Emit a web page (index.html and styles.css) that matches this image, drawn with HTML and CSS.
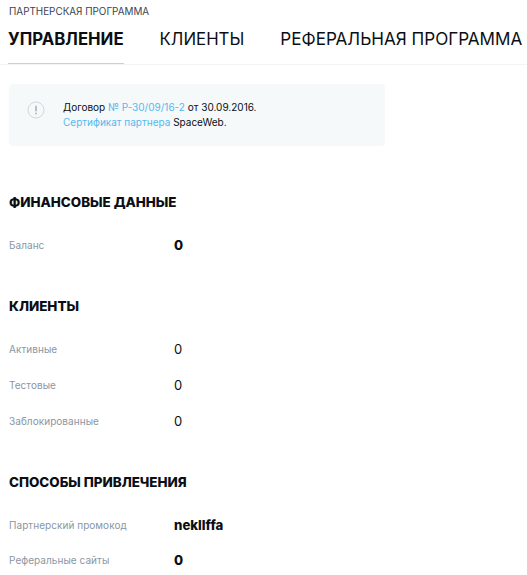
FILE: index.html
```html
<!DOCTYPE html>
<html lang="ru">
<head>
<meta charset="utf-8">
<title>Партнерская программа</title>
<link rel="stylesheet" href="styles.css">
</head>
<body>
<div class="crumb">ПАРТНЕРСКАЯ ПРОГРАММА</div>
<nav class="tabs">
  <a class="tab tab-active">УПРАВЛЕНИЕ</a>
  <a class="tab">КЛИЕНТЫ</a>
  <a class="tab tab-wide">РЕФЕРАЛЬНАЯ ПРОГРАММА</a>
</nav>
<div class="notice">
  <svg class="notice-icon" width="18" height="18" viewBox="0 0 18 18" aria-hidden="true">
    <circle cx="9" cy="9" r="8" fill="none" stroke="#d3d8db" stroke-width="1"/>
    <rect x="8" y="4.5" width="2" height="6" rx="0.8" fill="#b9c0c5"/>
    <rect x="8" y="11.5" width="2" height="2" rx="0.8" fill="#b9c0c5"/>
  </svg>
  <div class="notice-text">
    <div>Договор <a class="link">№ Р-30/09/16-2</a> от 30.09.2016.</div>
    <div><a class="link">Сертификат партнера</a> SpaceWeb.</div>
  </div>
</div>
<section class="group group-first">
  <h2 class="group-title">ФИНАНСОВЫЕ ДАННЫЕ</h2>
  <div class="row"><span class="label">Баланс</span><span class="value value-bold">0</span></div>
</section>
<section class="group group-clients">
  <h2 class="group-title">КЛИЕНТЫ</h2>
  <div class="row"><span class="label">Активные</span><span class="value">0</span></div>
  <div class="row"><span class="label">Тестовые</span><span class="value">0</span></div>
  <div class="row"><span class="label">Заблокированные</span><span class="value">0</span></div>
</section>
<section class="group group-last">
  <h2 class="group-title">СПОСОБЫ ПРИВЛЕЧЕНИЯ</h2>
  <div class="row row-short"><span class="label">Партнерский промокод</span><span class="value value-bold">neklIffa</span></div>
  <div class="row row-short"><span class="label">Реферальные сайты</span><span class="value value-bold">0</span></div>
</section>
</body>
</html>
```
FILE: styles.css
```css
* { box-sizing: border-box; }
html, body { overflow: hidden; }
body {
  margin: 0;
  height: 575px;
  background: #fff;
  color: #0b0f14;
  font-family: Inter, "Noto Sans", sans-serif;
}
.crumb {
  padding: 5px 0 0 9px;
  height: 20px;
  font-size: 9.9px;
  line-height: 13px;
  color: #3a4654;
  white-space: nowrap;
}
.tabs {
  display: flex;
  gap: 36px;
  height: 45px;
  padding-left: 8px;
  border-bottom: 1px solid #f1f5f6;
  white-space: nowrap;
}
.tab {
  height: 44px;
  padding-top: 7px;
  font-size: 16.8px;
  line-height: 24px;
  color: #0b0f14;
}
.tab-wide { font-size: 17.1px; }
.tab-active {
  font-weight: 700;
  border-bottom: 1px solid #c8d2d6;
}
.notice {
  display: flex;
  align-items: center;
  width: 376px;
  height: 62px;
  margin: 19px 0 0 9px;
  padding: 0 0 10px 18px;
  background: #f5f9fa;
  border-radius: 4px;
}
.notice-icon { flex: none; margin-right: 18px; }
.notice-text {
  padding-top: 10px;
  margin-bottom: 1px;
  font-size: 10px;
  line-height: 15px;
  white-space: nowrap;
}
.link { color: #55b8ee; }
.group { padding-left: 9px; height: 104px; }
.group-first { margin-top: 46px; }
.group-clients { height: 176px; }
.group-title {
  margin: 0 0 15px;
  height: 20px;
  font-size: 13.4px;
  line-height: 20px;
  font-weight: 800;
  white-space: nowrap;
}
.row {
  display: flex;
  align-items: center;
  height: 36px;
}
.row-short { height: 35.5px; }
.label {
  width: 165px;
  font-size: 10px;
  letter-spacing: 0.05px;
  color: #8a96a3;
  white-space: nowrap;
}
.value { font-size: 13px; font-weight: 400; }
.value-bold { font-size: 13.2px; font-weight: 800; }
```
